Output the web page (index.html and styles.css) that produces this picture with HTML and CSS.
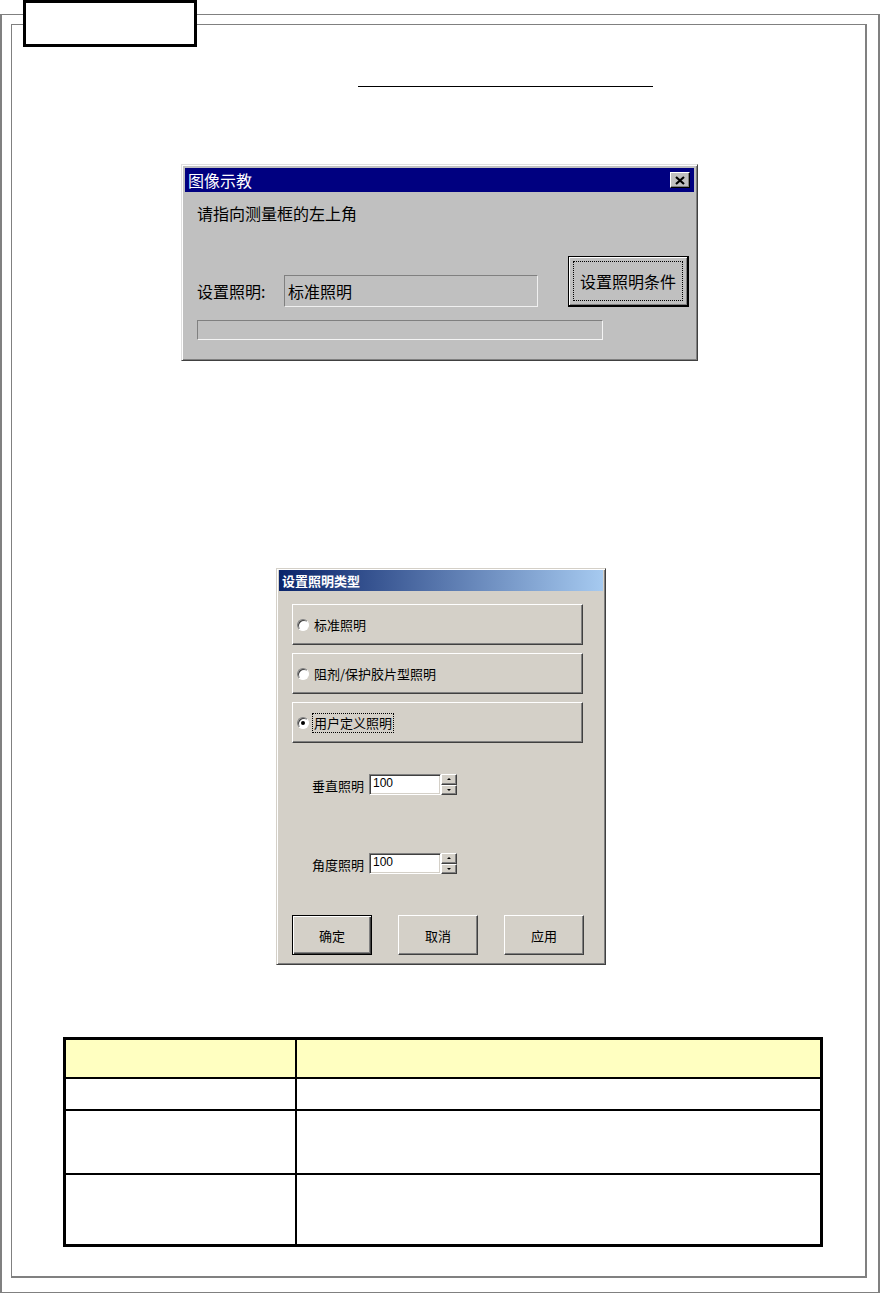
FILE: index.html
```html
<!DOCTYPE html>
<html lang="zh-CN">
<head>
<meta charset="utf-8">
<title>设置照明</title>
<link rel="stylesheet" href="styles.css">
</head>
<body>
<div class="tab-label"></div>
<div class="page">
  <div class="frame">
    <div class="underline"></div>

    <div class="dlg1">
      <div class="dlg1-title">
        <span>图像示教</span>
        <span class="close-btn"><svg width="10" height="9" viewBox="0 0 10 9"><path d="M1 1 L9 8 M9 1 L1 8" stroke="#000" stroke-width="2.2" fill="none"/></svg></span>
      </div>
      <div class="dlg1-body">
        <div class="dlg1-msg">请指向测量框的左上角</div>
        <div class="dlg1-row">
          <div class="dlg1-field">
            <span class="dlg1-label">设置照明:</span>
            <div class="dlg1-input">标准照明</div>
          </div>
          <div class="dlg1-btn"><div class="dlg1-focus">设置照明条件</div></div>
        </div>
        <div class="dlg1-progress"></div>
      </div>
    </div>

    <div class="dlg2">
      <div class="dlg2-title">设置照明类型</div>
      <div class="dlg2-options">
        <div class="opt"><span class="radio"></span><span class="opt-text">标准照明</span></div>
        <div class="opt"><span class="radio"></span><span class="opt-text">阻剂/保护胶片型照明</span></div>
        <div class="opt"><span class="radio checked"></span><span class="opt-text focus">用户定义照明</span></div>
      </div>
      <div class="spin-row first">
        <span class="spin-label">垂直照明</span>
        <div class="spin-input">100</div>
        <div class="spin-btns">
          <div class="spin-btn"><span class="tri-up"></span></div>
          <div class="spin-btn"><span class="tri-down"></span></div>
        </div>
      </div>
      <div class="spin-row second">
        <span class="spin-label">角度照明</span>
        <div class="spin-input">100</div>
        <div class="spin-btns">
          <div class="spin-btn"><span class="tri-up"></span></div>
          <div class="spin-btn"><span class="tri-down"></span></div>
        </div>
      </div>
      <div class="dlg2-footer">
        <div class="pbtn default">确定</div>
        <div class="pbtn">取消</div>
        <div class="pbtn">应用</div>
      </div>
    </div>

    <div class="tbl">
      <div class="cell head c1"></div>
      <div class="cell head c2"></div>
      <div class="cell c1"></div>
      <div class="cell c2"></div>
      <div class="cell c1"></div>
      <div class="cell c2"></div>
      <div class="cell c1 last"></div>
      <div class="cell c2 last"></div>
    </div>
  </div>
</div>
</body>
</html>
```

FILE: styles.css
```css
html, body {
  margin: 0;
  padding: 0;
  background: #ffffff;
}

body {
  position: relative;
  width: 880px;
  height: 1293px;
  overflow: hidden;
  font-family: "Noto Sans CJK SC", "Liberation Sans", sans-serif;
}

.tab-label {
  position: absolute;
  top: 0;
  left: 23px;
  width: 174px;
  height: 47px;
  box-sizing: border-box;
  border: 3px solid #000;
  background: #fff;
  z-index: 2;
}

.page {
  margin-top: 14px;
  height: 1279px;
  box-sizing: border-box;
  border-style: solid;
  border-color: #808080;
  border-width: 1px 2px 1px 2px;
  padding: 9px 11px 14px 9px;
}

.frame {
  height: 100%;
  box-sizing: border-box;
  border-style: solid;
  border-color: #808080;
  border-width: 1px 2px 2px 1px;
  overflow: hidden;
}

.underline {
  margin-top: 61px;
  margin-left: 346px;
  width: 295px;
  height: 1px;
  background: #000;
}

/* ---------- Dialog 1 ---------- */
.dlg1 {
  margin-top: 77px;
  margin-left: 169px;
  width: 517px;
  height: 197px;
  box-sizing: border-box;
  background: #c0c0c0;
  border: 1px solid;
  border-color: #dfdfdf #404040 #404040 #dfdfdf;
  box-shadow: inset 1px 1px #ffffff, inset -1px -1px #808080;
  padding: 3px;
  font-size: 16px;
  color: #000;
}

.dlg1-title {
  height: 24px;
  background: #000080;
  color: #fff;
  display: flex;
  align-items: center;
  justify-content: space-between;
  padding: 0 4px 0 3px;
  line-height: 24px;
}

.close-btn {
  width: 20px;
  height: 16px;
  box-sizing: border-box;
  background: #c0c0c0;
  border: 1px solid;
  border-color: #ffffff #000 #000 #ffffff;
  box-shadow: inset -1px -1px #808080;
  display: flex;
  align-items: center;
  justify-content: center;
}

.dlg1-body {
  padding-left: 12px;
}

.dlg1-msg {
  margin-top: 11px;
  line-height: 20px;
  height: 20px;
}

.dlg1-row {
  margin-top: 33px;
  display: flex;
  align-items: flex-end;
}

.dlg1-field {
  display: flex;
  align-items: center;
}

.dlg1-label {
  width: 87px;
  line-height: 20px;
}

.dlg1-input {
  width: 254px;
  height: 32px;
  box-sizing: border-box;
  border: 1px solid;
  border-color: #808080 #f0f0f0 #f0f0f0 #808080;
  padding-left: 3px;
  line-height: 30px;
}

.dlg1-btn {
  margin-left: 30px;
  width: 121px;
  height: 51px;
  box-sizing: border-box;
  border: 2px solid #000;
  border-width: 1px 2px 2px 1px;
  background: #c0c0c0;
  box-shadow: inset 1px 1px #ffffff, inset -1px -1px #808080;
  padding: 4px;
}

.dlg1-focus {
  height: 100%;
  box-sizing: border-box;
  border: 1px dotted #000;
  display: flex;
  align-items: center;
  justify-content: center;
}

.dlg1-progress {
  margin-top: 13px;
  width: 406px;
  height: 20px;
  box-sizing: border-box;
  border: 1px solid;
  border-color: #808080 #f4f4f4 #f4f4f4 #808080;
}

/* ---------- Dialog 2 ---------- */
.dlg2 {
  margin-top: 207px;
  margin-left: 264px;
  width: 330px;
  height: 397px;
  box-sizing: border-box;
  background: #d4d0c8;
  border: 1px solid;
  border-color: #d4d0c8 #404040 #404040 #d4d0c8;
  box-shadow: inset 1px 1px #ffffff, inset -1px -1px #808080;
  padding: 1px 2px 0 2px;
  font-size: 13px;
  color: #000;
}

.dlg2-title {
  height: 21px;
  background: linear-gradient(to right, #0a246a, #a6caf0);
  color: #fff;
  font-weight: bold;
  font-size: 13px;
  line-height: 21px;
  padding-left: 3px;
}

.dlg2-options {
  margin-top: 13px;
  margin-left: 13px;
  display: flex;
  flex-direction: column;
  gap: 8px;
}

.opt {
  width: 291px;
  height: 41px;
  box-sizing: border-box;
  background: #d4d0c8;
  border: 1px solid;
  border-color: #ffffff #404040 #404040 #ffffff;
  box-shadow: inset -1px -1px #808080;
  display: flex;
  align-items: center;
  padding-left: 4px;
}

.radio {
  width: 12px;
  height: 12px;
  box-sizing: border-box;
  border-radius: 50%;
  background: #fff;
  border: 1px solid;
  border-color: #808080 #ffffff #ffffff #808080;
  box-shadow: inset 1px 1px #404040;
  display: flex;
  align-items: center;
  justify-content: center;
  margin-right: 5px;
}

.radio.checked::after {
  content: "";
  width: 4px;
  height: 4px;
  border-radius: 50%;
  background: #000;
}

.opt-text {
  line-height: 18px;
}

.opt-text.focus {
  outline: 1px dotted #000;
  padding: 0 1px;
  margin-left: -1px;
}

.spin-row {
  margin-left: 33px;
  display: flex;
  align-items: center;
}

.spin-row.first {
  margin-top: 31px;
}

.spin-row.second {
  margin-top: 58px;
}

.spin-label {
  width: 57px;
  line-height: 18px;
  padding-top: 3px;
}

.spin-input {
  width: 72px;
  height: 21px;
  box-sizing: border-box;
  background: #fff;
  border: 1px solid;
  border-color: #808080 #ffffff #ffffff #808080;
  box-shadow: inset 1px 1px #404040, inset -1px -1px #d4d0c8;
  font-family: "Liberation Sans", sans-serif;
  font-size: 12px;
  line-height: 14px;
  padding: 1px 0 0 3px;
}

.spin-btns {
  display: flex;
  flex-direction: column;
  width: 16px;
  height: 21px;
}

.spin-btn {
  flex: 1;
  box-sizing: border-box;
  background: #d4d0c8;
  border: 1px solid;
  border-color: #ffffff #404040 #404040 #ffffff;
  box-shadow: inset -1px -1px #808080;
  display: flex;
  align-items: center;
  justify-content: center;
}

.tri-up {
  width: 0;
  height: 0;
  border-left: 2px solid transparent;
  border-right: 2px solid transparent;
  border-bottom: 2px solid #000;
}

.tri-down {
  width: 0;
  height: 0;
  border-left: 2px solid transparent;
  border-right: 2px solid transparent;
  border-top: 2px solid #000;
}

.dlg2-footer {
  margin-top: 41px;
  margin-left: 13px;
  display: flex;
  gap: 26px;
}

.pbtn {
  width: 80px;
  height: 40px;
  box-sizing: border-box;
  background: #d4d0c8;
  border: 1px solid;
  border-color: #ffffff #404040 #404040 #ffffff;
  box-shadow: inset -1px -1px #808080;
  display: flex;
  align-items: center;
  justify-content: center;
}

.pbtn.default {
  border: 1px solid #000;
  box-shadow: inset 1px 1px #ffffff, inset -1px -1px #404040, inset -2px -2px #808080;
}

/* ---------- Table ---------- */
.tbl {
  margin-top: 72px;
  margin-left: 51px;
  width: 760px;
  box-sizing: border-box;
  border: 3px solid #000;
  display: grid;
  grid-template-columns: 231px 1fr;
  grid-template-rows: 39px 32px 64px 69px;
}

.cell {
  box-sizing: border-box;
  background: #fff;
  border-bottom: 2px solid #000;
}

.cell.c1 {
  border-right: 2px solid #000;
}

.cell.head {
  background: #ffffc1;
}

.cell.last {
  border-bottom: none;
}
```
